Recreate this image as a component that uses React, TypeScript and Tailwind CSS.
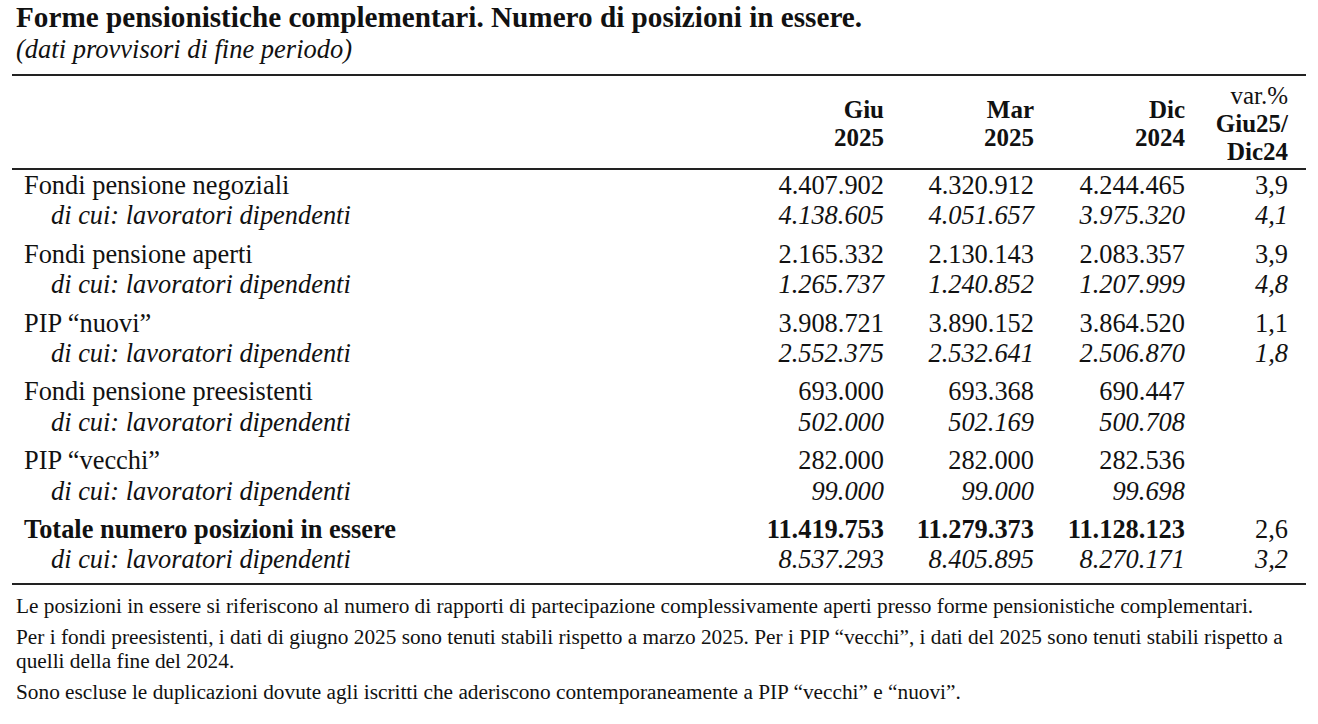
const rows = [
  {
    label: "Fondi pensione negoziali",
    values: ["4.407.902", "4.320.912", "4.244.465", "3,9"],
    sub: ["4.138.605", "4.051.657", "3.975.320", "4,1"],
  },
  {
    label: "Fondi pensione aperti",
    values: ["2.165.332", "2.130.143", "2.083.357", "3,9"],
    sub: ["1.265.737", "1.240.852", "1.207.999", "4,8"],
  },
  {
    label: "PIP “nuovi”",
    values: ["3.908.721", "3.890.152", "3.864.520", "1,1"],
    sub: ["2.552.375", "2.532.641", "2.506.870", "1,8"],
  },
  {
    label: "Fondi pensione preesistenti",
    values: ["693.000", "693.368", "690.447", ""],
    sub: ["502.000", "502.169", "500.708", ""],
  },
  {
    label: "PIP “vecchi”",
    values: ["282.000", "282.000", "282.536", ""],
    sub: ["99.000", "99.000", "99.698", ""],
  },
  {
    label: "Totale numero posizioni in essere",
    values: ["11.419.753", "11.279.373", "11.128.123", "2,6"],
    sub: ["8.537.293", "8.405.895", "8.270.171", "3,2"],
    bold: true,
  },
];

const cols = "grid grid-cols-[1fr_150px_150px_151px_103px] pr-[18px]";

export default function App() {
  return (
    <div className="min-h-[724px] w-[1318px] bg-white text-[#111] font-['Liberation_Serif',serif]">
      <div className="pl-4 pt-[1px]">
        <h1 className="text-[29.2px] font-bold leading-[32px]">
          Forme pensionistiche complementari. Numero di posizioni in essere.
        </h1>
        <p className="text-[26.5px] italic leading-[32px]">(dati provvisori di fine periodo)</p>
      </div>

      <div className="mx-3 mt-[9px] border-t-2 border-b-2 border-[#222]">
        {/* header */}
        <div className={`${cols} items-center border-b-2 border-[#222] pt-[6px] pb-[2px] text-[25px] font-bold leading-[28px] text-right`}>
          <div />
          <div>Giu<br />2025</div>
          <div>Mar<br />2025</div>
          <div>Dic<br />2024</div>
          <div>
            <span className="font-normal">var.%</span>
            <br />Giu25/
            <br />Dic24
          </div>
        </div>

        <div>
          {rows.map((r) => (
            <div key={r.label} className="pb-[8px] text-[26.4px] leading-[30.4px]">
              <div className={`${cols} ${r.bold ? "font-bold" : ""}`}>
                <div className="pl-3">{r.label}</div>
                {r.values.map((v, i) => (
                  <div key={i} className={`text-right ${i === 3 ? "font-normal" : ""}`}>{v}</div>
                ))}
              </div>
              <div className={`${cols} italic`}>
                <div className="pl-[39px]">di cui: lavoratori dipendenti</div>
                {r.sub.map((v, i) => (
                  <div key={i} className="text-right">{v}</div>
                ))}
              </div>
            </div>
          ))}
        </div>
      </div>

      <div className="pl-4 pt-[9px] text-[21.3px] leading-[24px]">
        <p>
          Le posizioni in essere si riferiscono al numero di rapporti di partecipazione complessivamente aperti presso forme pensionistiche complementari.
        </p>
        <p className="mt-[7px]">
          Per i fondi preesistenti, i dati di giugno 2025 sono tenuti stabili rispetto a marzo 2025. Per i PIP “vecchi”, i dati del 2025 sono tenuti stabili rispetto a
          <br />
          quelli della fine del 2024.
        </p>
        <p className="mt-[7px]">
          Sono escluse le duplicazioni dovute agli iscritti che aderiscono contemporaneamente a PIP “vecchi” e “nuovi”.
        </p>
      </div>
    </div>
  );
}
